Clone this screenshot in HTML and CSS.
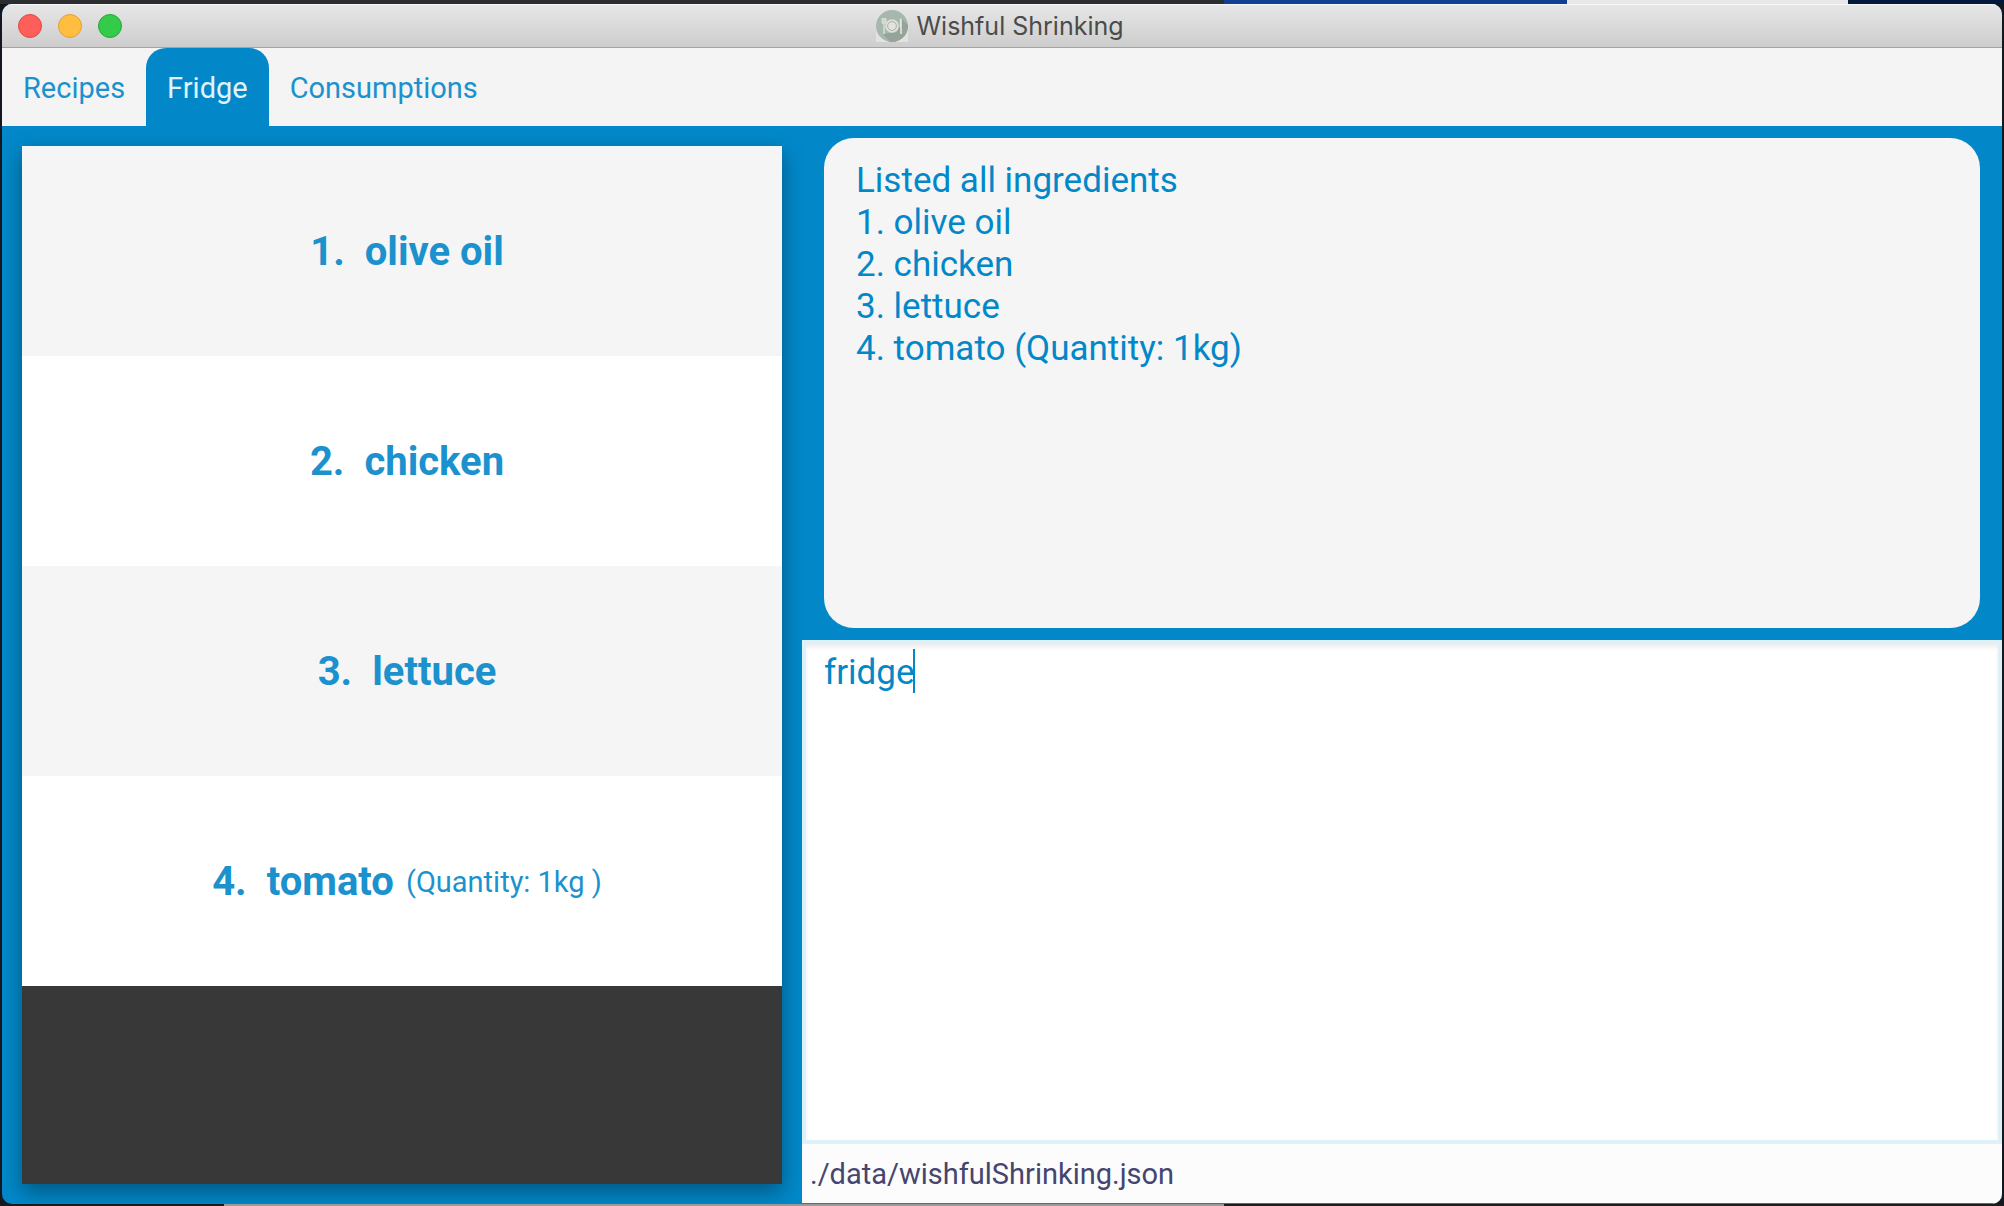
FILE: index.html
```html
<!DOCTYPE html>
<html lang="en">
<head>
<meta charset="utf-8">
<title>Wishful Shrinking</title>
<link rel="stylesheet" href="styles.css">
</head>
<body>
<div class="desktop">
  <div class="window">
    <header class="titlebar">
      <div class="lights">
        <button class="light light-close" type="button" aria-label="Close"></button>
        <button class="light light-minimize" type="button" aria-label="Minimize"></button>
        <button class="light light-zoom" type="button" aria-label="Zoom"></button>
      </div>
      <h1 class="title">
        <svg class="title-icon" viewBox="0 0 32 32" aria-hidden="true">
          <defs><clipPath id="disc"><circle cx="16" cy="16" r="16"/></clipPath></defs>
          <rect width="32" height="32" fill="#e2e2e2"/>
          <circle cx="16" cy="16" r="16" fill="#a6b8ae"/>
          <path d="M26 9L34 17V34H16L7 24L21 22Z" fill="#95a39b" clip-path="url(#disc)"/>
          <circle cx="16" cy="16" r="6.8" fill="#dedfd7"/>
          <circle cx="16" cy="16" r="4.4" fill="#e3e3dc" stroke="#a9b4ab" stroke-width="1"/>
          <path d="M6.300 8V12.500Q6.300 13.500 8 13.500Q9.700 13.500 9.700 12.500V8M8 8V24" fill="none" stroke="#dadcd5" stroke-width="1.500"/>
          <path d="M24 8.500Q25.800 8 25.800 10V24H24.200V17H23.600Z" fill="#e6e6e0"/>
        </svg>
        <span>Wishful Shrinking</span>
      </h1>
    </header>
    <nav class="tabs">
      <button class="tab" type="button">Recipes</button>
      <button class="tab tab-active" type="button">Fridge</button>
      <button class="tab" type="button">Consumptions</button>
    </nav>
    <main class="content">
      <section class="list-pane">
        <ul class="ingredients">
          <li class="ingredient"><span class="index">1.</span><span class="name">olive oil</span></li>
          <li class="ingredient"><span class="index">2.</span><span class="name">chicken</span></li>
          <li class="ingredient"><span class="index">3.</span><span class="name">lettuce</span></li>
          <li class="ingredient"><span class="index">4.</span><span class="name">tomato</span><span class="quantity">(Quantity: 1kg )</span></li>
        </ul>
      </section>
      <section class="command-pane">
        <output class="result">Listed all ingredients
1. olive oil
2. chicken
3. lettuce
4. tomato (Quantity: 1kg)</output>
        <div class="command">
          <textarea class="command-input" aria-label="Command" spellcheck="false">fridge</textarea>
          <span class="caret" aria-hidden="true"></span>
        </div>
        <footer class="status">./data/wishfulShrinking.json</footer>
      </section>
    </main>
  </div>
</div>
</body>
</html>
```
FILE: styles.css
```css
:root {
  --blue: #0288c9;
  --blue-text: #1b92cd;
  --panel: #f5f5f5;
  --frame: #def1f9;
}

* {
  box-sizing: border-box;
}

body {
  margin: 0;
  font-family: Roboto, "Liberation Sans", sans-serif;
}

.desktop {
  display: flex;
  min-height: 100vh;
  padding: 4px 2px 2px;
  background:
    linear-gradient(to right, #2c2d31 61.1%, #103f94 61.1%, #103f94 78.2%, #e8e8e8 78.2%, #e8e8e8 92.2%, #02193c 92.2%) top / 100% 4px no-repeat,
    linear-gradient(to right, #1b1a1f 11.2%, #9a9a9a 11.2%, #9a9a9a 61.1%, #1c1a1a 61.1%) bottom / 100% 2px no-repeat,
    #131820;
}

.window {
  flex: 1;
  display: flex;
  flex-direction: column;
  overflow: hidden;
  border-radius: 10px;
  background: var(--blue);
}

.titlebar {
  display: grid;
  grid-template-columns: 1fr auto 1fr;
  align-items: center;
  height: 44px;
  padding: 1px 20px 0 16px;
  background: linear-gradient(#e7e7e7, #cdcdcd);
  border-bottom: 1px solid #a5a2a5;
  box-shadow: inset 0 1px #f6f6f6;
}

.lights {
  display: flex;
  gap: 16px;
}

.light {
  width: 24px;
  height: 24px;
  padding: 0;
  border: 1px solid;
  border-radius: 50%;
}

.light-close {
  background: #fe5f5a;
  border-color: #e24741;
}

.light-minimize {
  background: #ffbe3f;
  border-color: #e0a033;
}

.light-zoom {
  background: #34ca4a;
  border-color: #23a933;
}

.title {
  display: flex;
  align-items: center;
  gap: 8px;
  margin: 0;
  color: #4b4b4b;
  font: 400 25px/34px Inter, "Liberation Sans", sans-serif;
}

.title-icon {
  width: 32px;
  height: 32px;
}

.tabs {
  display: flex;
  height: 78px;
  background: #f4f4f4;
}

.tab {
  padding: 2px 21px 0;
  border: 0;
  border-radius: 20px 20px 0 0;
  background: none;
  color: var(--blue-text);
  font: 400 29px/36px Roboto, sans-serif;
}

.tab-active {
  background: var(--blue);
  color: #e1f3fa;
}

.content {
  flex: 1;
  display: grid;
  grid-template-columns: 2fr 3fr;
}

.list-pane {
  display: flex;
  padding: 20px;
}

.ingredients {
  flex: 1;
  margin: 0;
  padding: 0;
  list-style: none;
  background: #383838;
  box-shadow: 0 8px 20px rgba(0, 0, 0, 0.36);
}

.ingredient {
  display: flex;
  align-items: center;
  justify-content: center;
  height: 210px;
  padding: 2px 0 0 10px;
  background: #fff;
  color: var(--blue-text);
  font-size: 40px;
  line-height: 48px;
  font-weight: 700;
}

.ingredient:nth-child(odd) {
  background: var(--panel);
}

.index {
  margin-right: 20px;
}

.quantity {
  margin-left: 12px;
  font-size: 29px;
  font-weight: 400;
}

.command-pane {
  display: grid;
  grid-template-rows: 51fr 50fr auto;
}

.result {
  margin: 12px 22px;
  padding: 22px 32px;
  border-radius: 30px;
  background: var(--panel);
  color: var(--blue);
  font-size: 35px;
  line-height: 42px;
  white-space: pre-line;
}

.command {
  position: relative;
  display: flex;
}

.command-input {
  flex: 1;
  padding: 8px 18px;
  border: 4px solid var(--frame);
  outline: 0;
  background: #fff;
  box-shadow: inset 0 4px 5px -1px #ececec;
  color: var(--blue);
  font: 400 35px/42px Roboto, sans-serif;
  resize: none;
}

.caret {
  position: absolute;
  top: 9px;
  left: 111px;
  width: 2px;
  height: 44px;
  background: var(--blue);
}

.status {
  padding: 12px 8px 11px;
  border-bottom: 1px solid var(--blue);
  background: #fcfcfc;
  color: #45456f;
  font-size: 29px;
  line-height: 36px;
}
```
